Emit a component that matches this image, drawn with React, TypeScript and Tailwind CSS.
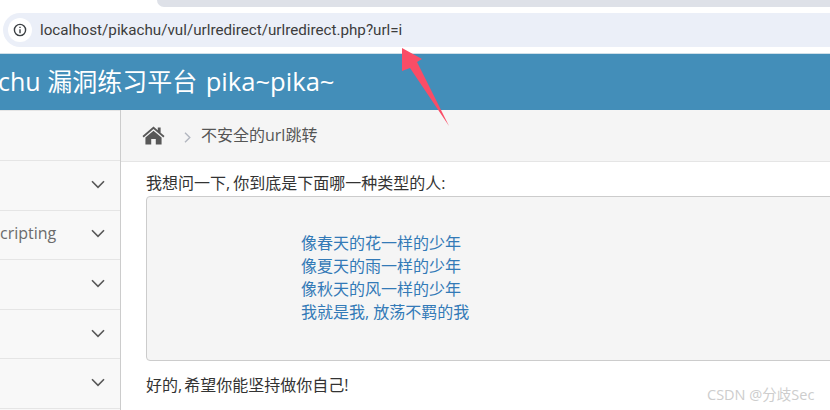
const cjk = "font-['Open_Sans','Noto_Sans_CJK_SC',sans-serif]";

const navItems = ['', 'cripting', '', '', ''];
const links = ['像春天的花一样的少年', '像夏天的雨一样的少年', '像秋天的风一样的少年'];

function Chevron() {
  return (
    <svg width="14" height="9" viewBox="0 0 14 9" fill="none" stroke="#585858" strokeWidth="1.6" className="-mt-[2px] shrink-0">
      <path d="M1 1.2 L7 7.4 L13 1.2" />
    </svg>
  );
}

function HomeIcon() {
  return (
    <svg width="23" height="19" viewBox="0 0 24 20" fill="#585858">
      <path d="M12 0.5 L16.5 4.4 V1.5 H19.5 V7 L23.6 10.6 L22.4 12 L12 3.2 L1.6 12 L0.4 10.6 Z" />
      <path d="M12 5 L20.5 12.2 V19.4 H14.4 V13.6 H9.6 V19.4 H3.5 V12.2 Z" />
    </svg>
  );
}

function InfoIcon() {
  return (
    <svg width="14" height="14" viewBox="0 0 14 14" fill="none" stroke="#3c4043" strokeWidth="1.4">
      <circle cx="7" cy="7" r="5.6" />
      <path d="M7 6.2 V10.2" />
      <path d="M7 3.7 V5" />
    </svg>
  );
}

export default function App() {
  return (
    <div className={`relative flex h-[410px] w-[830px] flex-col overflow-hidden bg-white ${cjk}`}>
      <div className="flex h-[13px] shrink-0 justify-end">
        <div className="h-[7px] w-[673px] rounded-bl-lg bg-[#dee1e8]" />
      </div>

      <div className="ml-[3px] flex h-[34px] shrink-0 items-center rounded-l-[17px] bg-[#ebeff8] pl-[5px]">
        <div className="flex h-6 w-6 items-center justify-center rounded-full bg-white">
          <InfoIcon />
        </div>
        <span className="ml-[8px] whitespace-nowrap font-['Roboto',sans-serif] text-[15.2px] text-[#3c3c3c]">
          localhost/pikachu/vul/urlredirect/urlredirect.php?url=i
        </span>
      </div>

      <div className="mt-[6px] flex h-[57px] shrink-0 items-center border-t border-[#cfdfe8] bg-[#438eb9]">
        <span className="-ml-[2px] whitespace-nowrap text-[25px] text-white">
          chu 漏洞练习平台 <span className="ml-[2px] text-[25.6px]">pika~pika~</span>
        </span>
      </div>

      <div className="flex min-h-0 flex-1">
        <aside className="flex w-[121px] shrink-0 flex-col border-r border-r-[#cccccc] bg-[#f8f8f8]">
          <div className="h-[51px] shrink-0 border-t border-b border-[#e5e5e5]" />
          {navItems.map((label, i) => (
            <div key={i} className="flex h-[49.6px] shrink-0 items-center justify-between border-b border-[#e5e5e5] pr-[15px]">
              <span className="mb-[3px] whitespace-nowrap text-[16px] text-[#6b6b6b]">{label}</span>
              <Chevron />
            </div>
          ))}
        </aside>

        <main className="min-w-0 flex-1">
          <div className="flex h-[52px] items-center border-b border-[#e5e5e5] bg-[#f5f5f5] pl-[21px]">
            <HomeIcon />
            <svg width="7" height="11" viewBox="0 0 7 11" fill="none" stroke="#b2b6bf" strokeWidth="1.4" className="ml-[19px] mt-[3px]">
              <path d="M1 0.8 L5.8 5.5 L1 10.2" />
            </svg>
            <span className="mb-[2px] ml-[10px] text-[16px] text-[#555555]">不安全的url跳转</span>
          </div>

          <div className="pl-[25px]">
            <p className="mt-[10px] h-[24px] text-[16px] leading-[23px] text-[#333333]">
              我想问一下<span className="mr-[3px]">,</span>你到底是下面哪一种类型的人:
            </p>
            <div className="-mr-2 flex h-[165px] flex-col rounded-l border border-[#cccccc] bg-[#f5f5f5] pl-[154px] pt-[35px]">
              {links.map((link) => (
                <a key={link} className="text-[16px] leading-[23px] text-[#337ab7]">{link}</a>
              ))}
              <a className="text-[16px] leading-[23px] text-[#337ab7]">
                我就是我<span className="mr-[4px]">,</span>放荡不羁的我
              </a>
            </div>
            <p className="mt-[13px] text-[16px] leading-[22px] text-[#333333]">
              好的<span className="mr-[2px]">,</span>希望你能坚持做你自己!
            </p>
          </div>
        </main>
      </div>

      <svg className="absolute left-[400px] top-[46px]" width="52" height="82" viewBox="0 0 52 82" fill="#fa4d66">
        <path d="M2 2 L22 13 L17 16 L49 80 L10 22 L2 25 Z" />
      </svg>

      <span className="absolute left-[707px] top-[384px] text-[14.5px] text-[#cdcdcd]">CSDN @分歧Sec</span>
    </div>
  );
}
